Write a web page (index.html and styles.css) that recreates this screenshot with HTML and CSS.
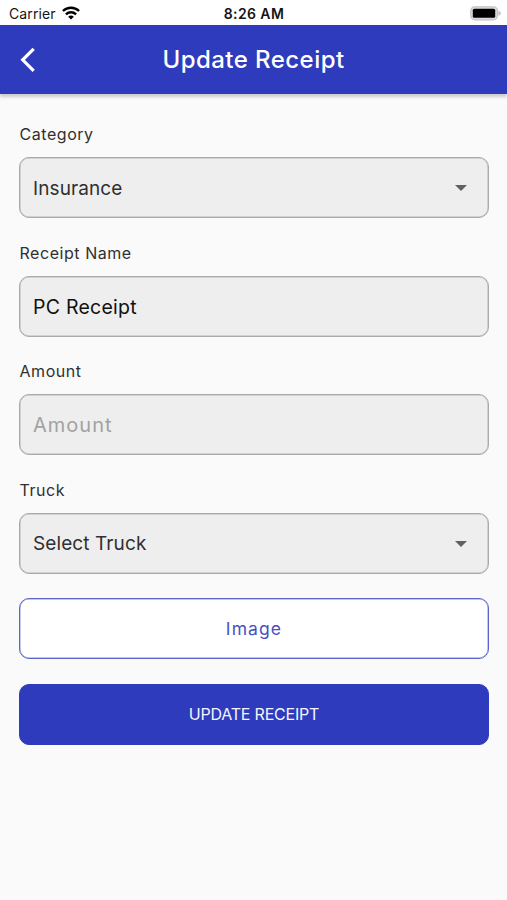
FILE: index.html
```html
<!DOCTYPE html>
<html lang="en">
<head>
<meta charset="utf-8">
<meta name="viewport" content="width=device-width, initial-scale=1">
<title>Update Receipt</title>
<link rel="stylesheet" href="styles.css">
</head>
<body>
<div class="status">
  <div class="carrier"><span>Carrier</span>
    <svg class="wifi" width="18" height="14" viewBox="0 0 18 14" fill="none" stroke="#000" stroke-width="2.4"><path d="M.9 5C5.500.6 12.500.6 17.100 5"/><path d="M3.900 8.300C6.800 5.600 11.200 5.600 14.100 8.300"/><path d="M9 13.400 6.200 10.700C7.800 9.200 10.200 9.200 11.800 10.700Z" fill="#000" stroke="none"/></svg>
  </div>
  <span class="time">8:26 AM</span>
  <svg class="battery" width="31" height="15" viewBox="0 0 31 15"><rect x=".8" y=".8" width="26.600" height="13" rx="4" fill="#ddd" stroke="#c4c4c4" stroke-width="1.300"/><rect x="2.800" y="2.800" width="22.400" height="9" rx="1.500" fill="#000"/><path d="M28.500 4.600Q30.800 5.600 30.800 7.300T28.500 10Z" fill="#bdbdbd"/></svg>
</div>
<header class="appbar">
  <svg class="back" width="16" height="26" viewBox="0 0 16 26" fill="none" stroke="#fff" stroke-width="3.200"><path d="M13.700 1.800 2.700 12.800 13.700 23.800"/></svg>
  <h1 class="title">Update Receipt</h1>
</header>
<main class="form">
  <div class="field">
    <span class="label">Category</span>
    <div class="box"><span class="value insurance">Insurance</span><svg class="caret" width="12" height="6" viewBox="0 0 12 6"><path d="M0 0H12L6 6Z" fill="#616161"/></svg></div>
  </div>
  <div class="field">
    <span class="label">Receipt Name</span>
    <div class="box"><span class="entry">PC Receipt</span></div>
  </div>
  <div class="field">
    <span class="label">Amount</span>
    <div class="box"><span class="entry placeholder">Amount</span></div>
  </div>
  <div class="field">
    <span class="label">Truck</span>
    <div class="box"><span class="value">Select Truck</span><svg class="caret" width="12" height="6" viewBox="0 0 12 6"><path d="M0 0H12L6 6Z" fill="#616161"/></svg></div>
  </div>
  <button class="button outline" type="button"><span>Image</span></button>
  <button class="button primary" type="button"><span>UPDATE RECEIPT</span></button>
</main>
</body>
</html>
```
FILE: styles.css
```css
* { box-sizing: border-box; }
body { margin: 0; min-height: 900px; background: #fafafa; font-family: Inter, "Liberation Sans", sans-serif; color: #303030; }
.status { height: 25px; background: #fff; display: grid; grid-template-columns: 1fr auto 1fr; align-items: center; padding: 2px 6px 0 9px; color: #151515; font-size: 14px; line-height: 20px; }
.carrier { display: flex; align-items: center; gap: 6px; letter-spacing: .1px; }
.wifi { margin-top: -2px; }
.time { font-weight: 600; font-size: 14px; letter-spacing: .4px; margin-left: -2px; }
.battery { justify-self: end; }
.appbar { height: 69px; background: #2e3bbd; display: grid; grid-template-columns: 40px 1fr 40px; align-items: center; padding: 0 20px; box-shadow: 0 3px 3px rgba(0,0,0,.18); }
.title { margin: 0; color: #fff; font-size: 24px; font-weight: 500; line-height: 32px; text-align: center; letter-spacing: .45px; white-space: nowrap; }
.form { padding: 30px 18px 0 19px; }
.field { margin-bottom: 24.5px; }
.label { display: block; width: max-content; height: 20px; line-height: 20px; margin: 0 0 13px .5px; font-size: 16px; letter-spacing: .55px; }
.box { height: 61px; display: flex; align-items: center; justify-content: space-between; padding: 0 21px 0 13px; border: 1px solid #aaa; border-radius: 10px; background: #eee; box-shadow: inset 0 0 0 .5px #b5b5b5; }
.value { font-size: 19px; letter-spacing: .1px; padding-top: 1px; }
.caret { margin-top: 1px; }
.entry { font-size: 19.500px; color: #111; letter-spacing: .25px; padding-top: 1px; }
.placeholder { color: #a2a2a2; font-size: 20px; letter-spacing: 1px; }
.button { display: flex; width: 100%; height: 61px; align-items: center; justify-content: center; padding: 0; margin: 0 0 24.5px; border: 1px solid #5c65c8; border-radius: 10px; font: 17.5px/24px Inter, "Liberation Sans", sans-serif; letter-spacing: 1.1px; }
.outline { background: #fff; color: #4650c4; box-shadow: inset 0 0 0 .5px #8b92dc; }
.primary { background: #2e3bbd; border-color: #2e3bbd; color: #f4f5ff; font-size: 16px; letter-spacing: -.2px; }
```
